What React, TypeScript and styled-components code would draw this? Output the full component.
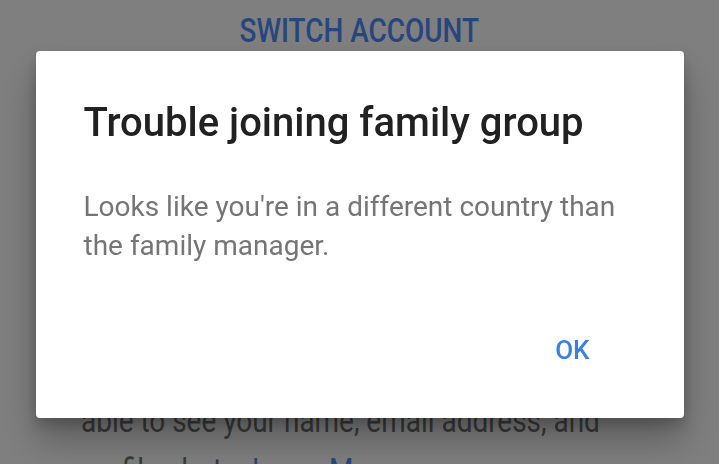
import React from 'react'
import styled, { createGlobalStyle } from 'styled-components'

const GlobalStyle = createGlobalStyle`
  html, body {
    margin: 0;
    padding: 0;
    width: 719px;
    height: 464px;
    overflow: hidden;
    background: #ffffff;
    font-family: Roboto, "Noto Sans", sans-serif;
  }
`;

const Page = styled.div`
  width: 719px;
  height: 464px;
  display: flex;
  flex-direction: column;
  align-items: center;
  overflow: hidden;
`;

const Condensed = styled.div`
  transform: scaleX(0.86);
  transform-origin: left top;
`;

const SwitchAccount = styled.div`
  margin-top: 12px;
  font-size: 32.5px;
  font-weight: 500;
  line-height: 38px;
  color: #4e8cfc;
  transform: scaleX(0.86);
`;

const Paragraph = styled.p`
  align-self: stretch;
  margin: 0;
  padding: 0 0 0 81px;
  font-size: 32.5px;
  line-height: 50px;
  color: #757575;
  white-space: nowrap;
`;

const Link = styled.span`
  color: #4e8cfc;
`;

const Scrim = styled.div`
  position: fixed;
  inset: 0;
  background: rgba(0, 0, 0, 0.5);
  display: flex;
  justify-content: center;
  align-items: flex-start;
`;

const Dialog = styled.div`
  margin-top: 51px;
  width: 648px;
  height: 367px;
  box-sizing: border-box;
  background: #ffffff;
  border-radius: 4px;
  box-shadow: 0 22px 36px rgba(0, 0, 0, 0.28), 0 6px 14px rgba(0, 0, 0, 0.2);
  padding: 47px 48px 0 48px;
  display: flex;
  flex-direction: column;
`;

const Title = styled.h2`
  margin: 0;
  font-size: 40px;
  font-weight: 500;
  line-height: 50px;
  color: #212121;
`;

const Body = styled.p`
  margin: 39px 0 0 0;
  font-size: 28px;
  line-height: 39px;
  color: #757575;
`;

const Actions = styled.div`
  margin-top: auto;
  margin-bottom: 53px;
  display: flex;
  justify-content: flex-end;
`;

const TextButton = styled.button`
  background: none;
  border: none;
  padding: 0 46px 0 0;
  font-family: Roboto, sans-serif;
  font-size: 26px;
  font-weight: 500;
  color: #3b7fe0;
  cursor: pointer;
`;

const App = () => {
    return (
        <>
            <GlobalStyle />
            <Page>
                <SwitchAccount>SWITCH ACCOUNT</SwitchAccount>
                <Paragraph style={{ marginTop: 296 }}>
                    <Condensed>
                        Members of your family group will be<br />
                        able to see your name, email address, and<br />
                        profile photo. <Link>Learn More</Link>
                    </Condensed>
                </Paragraph>
            </Page>
            <Scrim>
                <Dialog>
                    <Title>Trouble joining family group</Title>
                    <Body>
                        Looks like you're in a different country than the family manager.
                    </Body>
                    <Actions>
                        <TextButton>OK</TextButton>
                    </Actions>
                </Dialog>
            </Scrim>
        </>
    )
}

export default App
